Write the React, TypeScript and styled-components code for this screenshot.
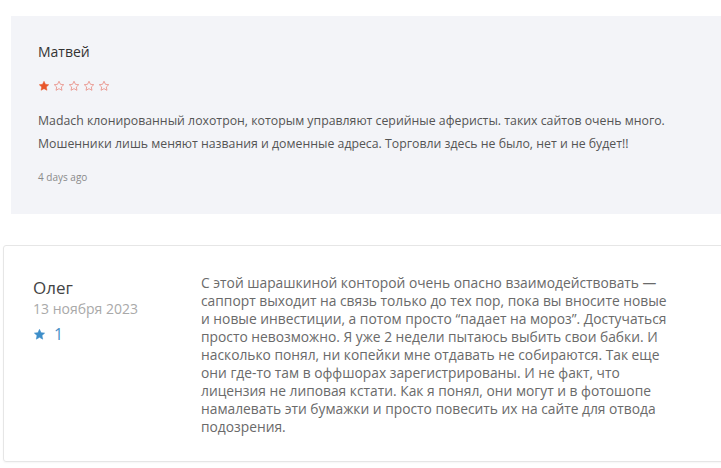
import React from "react";
import styled, { createGlobalStyle } from "styled-components";

const Global = createGlobalStyle`
  html, body { margin: 0; padding: 0; background: #ffffff; }
  body { font-family: "Open Sans", "Noto Sans", sans-serif; width: 721px; height: 468px; overflow: hidden; }
`;

const Page = styled.div`
  display: flex;
  flex-direction: column;
  padding-top: 16px;
`;

const GreyCard = styled.section`
  margin-left: 11px;
  width: 730px;
  height: 198px;
  box-sizing: border-box;
  background: #f3f4f8;
  padding: 26px 0 0 27px;
  display: flex;
  flex-direction: column;
`;

const Name = styled.div`
  font-size: 14px;
  color: #333;
  line-height: 20px;
`;

const StarRow = styled.div`
  display: flex;
  gap: 3px;
  margin-top: 18px;
`;

const Body = styled.p`
  margin: 17px 0 0;
  font-size: 12.3px;
  line-height: 23px;
  color: #555;
`;

const Ago = styled.div`
  margin-top: 15px;
  font-size: 10px;
  color: #8a8a8a;
`;

const WhiteCard = styled.section`
  margin-top: 31px;
  margin-left: 3px;
  width: 730px;
  height: 217px;
  box-sizing: border-box;
  border: 1px solid #e6e6e6;
  border-radius: 3px;
  box-shadow: 0 1px 2px rgba(0, 0, 0, 0.04);
  display: grid;
  grid-template-columns: 168px 480px;
  padding: 28px 0 0 29px;
`;

const Author = styled.div`
  display: flex;
  flex-direction: column;
  padding-top: 3px;
`;

const AuthorName = styled.div`
  font-size: 17px;
  line-height: 22px;
  color: #444;
`;

const DateText = styled.div`
  font-size: 14px;
  line-height: 20px;
  color: #a9a9a9;
`;

const Score = styled.div`
  display: flex;
  align-items: center;
  gap: 8px;
  margin-top: 4px;
  font-size: 16px;
  color: #4a90c6;
`;

const Review = styled.p`
  margin: 0;
  font-size: 13.8px;
  line-height: 18px;
  color: #6a6a6a;
  width: 476px;
`;

const Star = ({ filled, color, size = 12 }: { filled: boolean; color: string; size?: number }) => (
  <svg width={size} height={size} viewBox="0 0 24 24">
    <path
      d="M12 2.5l2.9 6.1 6.6.8-4.9 4.6 1.3 6.6L12 17.3l-5.9 3.3 1.3-6.6-4.9-4.6 6.6-.8z"
      fill={filled ? color : "none"}
      stroke={color}
      strokeWidth={filled ? 1 : 1.6}
      strokeLinejoin="round"
    />
  </svg>
);

export default function App() {
  return (
    <>
      <Global />
      <Page>
        <GreyCard>
          <Name>Матвей</Name>
          <StarRow>
            <Star filled color="#e8562a" />
            {[0, 1, 2, 3].map((i) => (
              <Star key={i} filled={false} color="#e88a80" />
            ))}
          </StarRow>
          <Body>
            Madach клонированный лохотрон, которым управляют серийные аферисты. таких сайтов очень много.
            <br />
            Мошенники лишь меняют названия и доменные адреса. Торговли здесь не было, нет и не будет!!
          </Body>
          <Ago>4 days ago</Ago>
        </GreyCard>
        <WhiteCard>
          <Author>
            <AuthorName>Олег</AuthorName>
            <DateText>13 ноября 2023</DateText>
            <Score>
              <Star filled color="#3d8ec9" size={13} />
              <span>1</span>
            </Score>
          </Author>
          <Review>
            С этой шарашкиной конторой очень опасно взаимодействовать — саппорт выходит на связь только до тех пор, пока вы вносите новые и новые инвестиции, а потом просто “падает на мороз”. Достучаться просто невозможно. Я уже 2 недели пытаюсь выбить свои бабки. И насколько понял, ни копейки мне отдавать не собираются. Так еще они где-то там в оффшорах зарегистрированы. И не факт, что лицензия не липовая кстати. Как я понял, они могут и в фотошопе намалевать эти бумажки и просто повесить их на сайте для отвода подозрения.
          </Review>
        </WhiteCard>
      </Page>
    </>
  );
}
